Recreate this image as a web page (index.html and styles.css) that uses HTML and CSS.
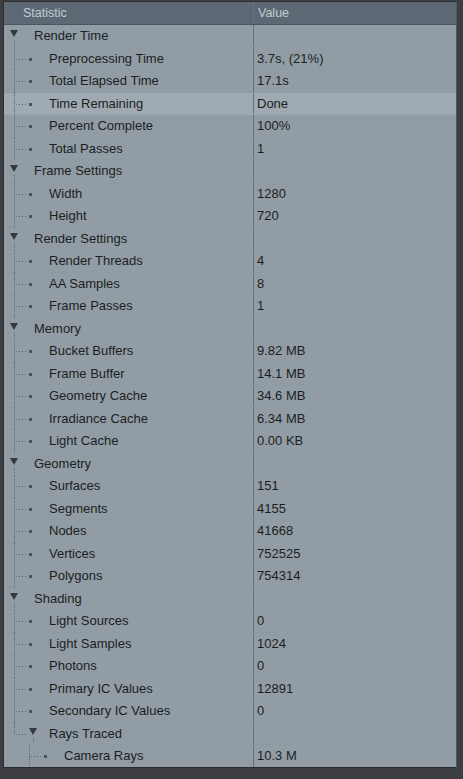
FILE: index.html
```html
<!DOCTYPE html>
<html>
<head>
<meta charset="utf-8">
<link rel="stylesheet" href="styles.css">
</head>
<body>
<div class="frame">
  <div class="panel">
    <div class="head">
      <div class="hcell name-col">Statistic</div>
      <div class="hcell val-col">Value</div>
    </div>
    <div class="body">
      <div class="row cat"><div class="name-col"><svg class="tri" viewBox="0 0 8 7"><polygon points="0,0 8,0 4,7"/></svg><span class="lbl">Render Time</span></div><div class="val-col"></div></div>
      <div class="row kid"><div class="name-col"><span class="twig"></span><span class="lbl">Preprocessing Time</span></div><div class="val-col">3.7s, (21%)</div></div>
      <div class="row kid"><div class="name-col"><span class="twig"></span><span class="lbl">Total Elapsed Time</span></div><div class="val-col">17.1s</div></div>
      <div class="row kid hl"><div class="name-col"><span class="twig"></span><span class="lbl">Time Remaining</span></div><div class="val-col">Done</div></div>
      <div class="row kid"><div class="name-col"><span class="twig"></span><span class="lbl">Percent Complete</span></div><div class="val-col">100%</div></div>
      <div class="row kid"><div class="name-col"><span class="twig"></span><span class="lbl">Total Passes</span></div><div class="val-col">1</div></div>
      <div class="row cat"><div class="name-col"><svg class="tri" viewBox="0 0 8 7"><polygon points="0,0 8,0 4,7"/></svg><span class="lbl">Frame Settings</span></div><div class="val-col"></div></div>
      <div class="row kid"><div class="name-col"><span class="twig"></span><span class="lbl">Width</span></div><div class="val-col">1280</div></div>
      <div class="row kid"><div class="name-col"><span class="twig"></span><span class="lbl">Height</span></div><div class="val-col">720</div></div>
      <div class="row cat"><div class="name-col"><svg class="tri" viewBox="0 0 8 7"><polygon points="0,0 8,0 4,7"/></svg><span class="lbl">Render Settings</span></div><div class="val-col"></div></div>
      <div class="row kid"><div class="name-col"><span class="twig"></span><span class="lbl">Render Threads</span></div><div class="val-col">4</div></div>
      <div class="row kid"><div class="name-col"><span class="twig"></span><span class="lbl">AA Samples</span></div><div class="val-col">8</div></div>
      <div class="row kid"><div class="name-col"><span class="twig"></span><span class="lbl">Frame Passes</span></div><div class="val-col">1</div></div>
      <div class="row cat"><div class="name-col"><svg class="tri" viewBox="0 0 8 7"><polygon points="0,0 8,0 4,7"/></svg><span class="lbl">Memory</span></div><div class="val-col"></div></div>
      <div class="row kid"><div class="name-col"><span class="twig"></span><span class="lbl">Bucket Buffers</span></div><div class="val-col">9.82 MB</div></div>
      <div class="row kid"><div class="name-col"><span class="twig"></span><span class="lbl">Frame Buffer</span></div><div class="val-col">14.1 MB</div></div>
      <div class="row kid"><div class="name-col"><span class="twig"></span><span class="lbl">Geometry Cache</span></div><div class="val-col">34.6 MB</div></div>
      <div class="row kid"><div class="name-col"><span class="twig"></span><span class="lbl">Irradiance Cache</span></div><div class="val-col">6.34 MB</div></div>
      <div class="row kid"><div class="name-col"><span class="twig"></span><span class="lbl">Light Cache</span></div><div class="val-col">0.00 KB</div></div>
      <div class="row cat"><div class="name-col"><svg class="tri" viewBox="0 0 8 7"><polygon points="0,0 8,0 4,7"/></svg><span class="lbl">Geometry</span></div><div class="val-col"></div></div>
      <div class="row kid"><div class="name-col"><span class="twig"></span><span class="lbl">Surfaces</span></div><div class="val-col">151</div></div>
      <div class="row kid"><div class="name-col"><span class="twig"></span><span class="lbl">Segments</span></div><div class="val-col">4155</div></div>
      <div class="row kid"><div class="name-col"><span class="twig"></span><span class="lbl">Nodes</span></div><div class="val-col">41668</div></div>
      <div class="row kid"><div class="name-col"><span class="twig"></span><span class="lbl">Vertices</span></div><div class="val-col">752525</div></div>
      <div class="row kid"><div class="name-col"><span class="twig"></span><span class="lbl">Polygons</span></div><div class="val-col">754314</div></div>
      <div class="row cat"><div class="name-col"><svg class="tri" viewBox="0 0 8 7"><polygon points="0,0 8,0 4,7"/></svg><span class="lbl">Shading</span></div><div class="val-col"></div></div>
      <div class="row kid"><div class="name-col"><span class="twig"></span><span class="lbl">Light Sources</span></div><div class="val-col">0</div></div>
      <div class="row kid"><div class="name-col"><span class="twig"></span><span class="lbl">Light Samples</span></div><div class="val-col">1024</div></div>
      <div class="row kid"><div class="name-col"><span class="twig"></span><span class="lbl">Photons</span></div><div class="val-col">0</div></div>
      <div class="row kid"><div class="name-col"><span class="twig"></span><span class="lbl">Primary IC Values</span></div><div class="val-col">12891</div></div>
      <div class="row kid"><div class="name-col"><span class="twig"></span><span class="lbl">Secondary IC Values</span></div><div class="val-col">0</div></div>
      <div class="row sub"><div class="name-col"><span class="elbow"></span><svg class="tri" viewBox="0 0 8 7"><polygon points="0,0 8,0 4,7"/></svg><span class="lbl">Rays Traced</span></div><div class="val-col"></div></div>
      <div class="row leaf"><div class="name-col"><span class="twig"></span><span class="lbl">Camera Rays</span></div><div class="val-col">10.3 M</div></div>
      <div class="row empty"><div class="name-col"><span class="twig"></span></div><div class="val-col"></div></div>
    </div>
  </div>
</div>
</body>
</html>
```
FILE: styles.css
```css
html, body {
  margin: 0;
  padding: 0;
  background: #3d3e41;
  width: 463px;
  height: 779px;
  overflow: hidden;
}
.frame {
  display: flex;
  padding: 1px 6px 5px 3px;
  height: 773px;
  box-sizing: border-box;
}
.panel {
  flex: 1;
  display: flex;
  flex-direction: column;
  background: #929ca4;
  border-left: 1px solid #2f3033;
  border-top: 1px solid #2f3033;
  border-right: 1px solid #55575b;
  border-bottom: 1px solid #2a2b2e;
  font-family: "Liberation Sans", Arial, sans-serif;
  font-size: 13px;
  color: #1b1f23;
  overflow: hidden;
}
.head {
  display: flex;
  height: 22px;
  background: #5c6874;
  color: #c3cbd2;
  font-size: 12.5px;
  border-bottom: 1px solid #4b555e;
  flex: none;
}
.hcell {
  display: flex;
  align-items: center;
}
.head .name-col {
  padding-left: 19px;
  padding-bottom: 1px;
}
.head .val-col {
  padding-left: 4px;
  padding-bottom: 1px;
}
.name-col {
  width: 250px;
  flex: none;
  box-sizing: border-box;
  border-right: 1px solid #67717a;
  display: flex;
  align-items: center;
  height: 100%;
}
.val-col {
  flex: 1;
  padding-left: 3px;
  display: flex;
  align-items: center;
  height: 100%;
}
.body {
  flex: 1;
  display: flex;
  flex-direction: column;
}
.row {
  display: flex;
  height: 22.5px;
  flex: none;
  padding-bottom: 1px;
  box-sizing: border-box;
  box-shadow: inset 0 -1px 0 rgba(120,130,138,0.12);
}
.row.empty {
  flex: 1;
  box-shadow: none;
}
.row.hl {
  background: #a0aab2;
}
.tri {
  width: 8px;
  height: 7px;
  margin-left: 6px;
  margin-right: 4px;
  flex: none;
  fill: #33393e;
  position: relative;
  top: -2px;
}
.cat .lbl {
  margin-left: 12px;
}
.cat .name-col {
  background: repeating-linear-gradient(to bottom, #5d676f 0 1px, transparent 1px 2px) 10px 15px / 1px 9px no-repeat;
}
.twig {
  width: 26px;
  align-self: stretch;
  margin-left: 10px;
  margin-bottom: -1px;
  flex: none;
  background:
    repeating-linear-gradient(to bottom, #5d676f 0 1px, transparent 1px 2px) 0 0 / 1px 100% no-repeat,
    repeating-linear-gradient(to right, #5d676f 0 1px, transparent 1px 3px) 2px 11px / 12px 1px no-repeat,
    linear-gradient(#4a545c, #4a545c) 15px 10px / 3px 3px no-repeat;
}
.kid .lbl {
  margin-left: 9px;
}
.elbow {
  width: 15px;
  align-self: stretch;
  margin-left: 10px;
  flex: none;
  background:
    repeating-linear-gradient(to bottom, #5d676f 0 1px, transparent 1px 2px) 0 0 / 1px 12px no-repeat,
    repeating-linear-gradient(to right, #5d676f 0 1px, transparent 1px 3px) 2px 11px / 12px 1px no-repeat;
}
.sub .tri {
  margin-left: 0;
}
.sub .name-col {
  background: repeating-linear-gradient(to bottom, #5d676f 0 1px, transparent 1px 2px) 29px 15px / 1px 9px no-repeat;
}
.sub .lbl {
  margin-left: 8px;
}
.leaf .twig {
  margin-left: 25px;
}
.leaf .lbl {
  margin-left: 9px;
}
.empty .twig {
  margin-left: 25px;
  background:
    repeating-linear-gradient(to bottom, #5d676f 0 1px, transparent 1px 2px) 0 0 / 1px 100% no-repeat;
}
```
